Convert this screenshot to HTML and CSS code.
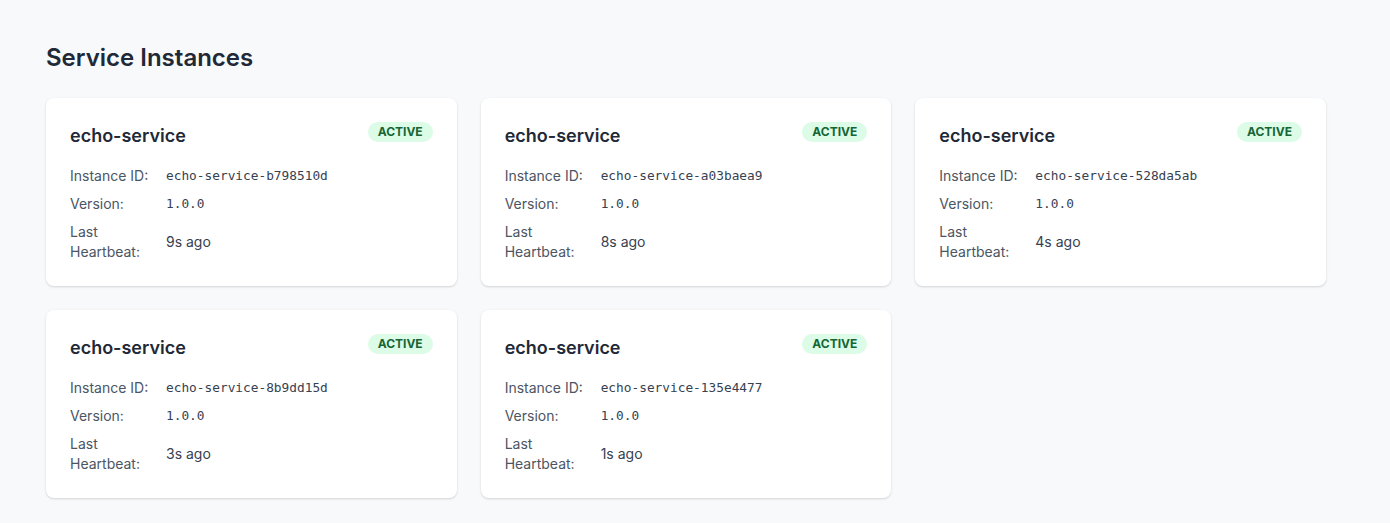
FILE: index.html
```html
<!DOCTYPE html>
<html>
<head>
<meta charset="utf-8">
<link rel="stylesheet" href="styles.css">
</head>
<body>
<main class="page">
  <h1 class="page-title">Service Instances</h1>
  <div class="grid">
    <div class="card">
      <div class="card-head"><h2 class="name">echo-service</h2><span class="badge">ACTIVE</span></div>
      <div class="rows">
        <div class="row"><span class="label">Instance ID:</span><span class="value mono">echo-service-b798510d</span></div>
        <div class="row"><span class="label">Version:</span><span class="value mono">1.0.0</span></div>
        <div class="row"><span class="label">Last Heartbeat:</span><span class="value">9s ago</span></div>
      </div>
    </div>
    <div class="card">
      <div class="card-head"><h2 class="name">echo-service</h2><span class="badge">ACTIVE</span></div>
      <div class="rows">
        <div class="row"><span class="label">Instance ID:</span><span class="value mono">echo-service-a03baea9</span></div>
        <div class="row"><span class="label">Version:</span><span class="value mono">1.0.0</span></div>
        <div class="row"><span class="label">Last Heartbeat:</span><span class="value">8s ago</span></div>
      </div>
    </div>
    <div class="card">
      <div class="card-head"><h2 class="name">echo-service</h2><span class="badge">ACTIVE</span></div>
      <div class="rows">
        <div class="row"><span class="label">Instance ID:</span><span class="value mono">echo-service-528da5ab</span></div>
        <div class="row"><span class="label">Version:</span><span class="value mono">1.0.0</span></div>
        <div class="row"><span class="label">Last Heartbeat:</span><span class="value">4s ago</span></div>
      </div>
    </div>
    <div class="card">
      <div class="card-head"><h2 class="name">echo-service</h2><span class="badge">ACTIVE</span></div>
      <div class="rows">
        <div class="row"><span class="label">Instance ID:</span><span class="value mono">echo-service-8b9dd15d</span></div>
        <div class="row"><span class="label">Version:</span><span class="value mono">1.0.0</span></div>
        <div class="row"><span class="label">Last Heartbeat:</span><span class="value">3s ago</span></div>
      </div>
    </div>
    <div class="card">
      <div class="card-head"><h2 class="name">echo-service</h2><span class="badge">ACTIVE</span></div>
      <div class="rows">
        <div class="row"><span class="label">Instance ID:</span><span class="value mono">echo-service-135e4477</span></div>
        <div class="row"><span class="label">Version:</span><span class="value mono">1.0.0</span></div>
        <div class="row"><span class="label">Last Heartbeat:</span><span class="value">1s ago</span></div>
      </div>
    </div>
  </div>
</main>
</body>
</html>
```

FILE: styles.css
```css
* { box-sizing: border-box; }
html, body { margin: 0; padding: 0; }
body {
  background: #f8f9fa;
  font-family: Inter, "Noto Sans", sans-serif;
  color: #1f2937;
}
.page {
  width: 1372px;
  padding: 42px 46px 24px;
}
.page-title {
  margin: 0 0 24px;
  font-size: 24px;
  line-height: 32px;
  font-weight: 600;
  color: #1f2937;
}
.grid {
  display: grid;
  width: 1280px;
  grid-template-columns: repeat(3, 1fr);
  gap: 24px;
}
.card {
  background: #fff;
  border-radius: 8px;
  padding: 24px;
  box-shadow: 0 1px 3px rgba(0,0,0,0.10), 0 1px 2px rgba(0,0,0,0.06);
}
.card-head {
  display: flex;
  justify-content: space-between;
  align-items: flex-start;
  margin-bottom: 17px;
}
.name {
  margin: 0;
  font-size: 18px;
  line-height: 27px;
  font-weight: 600;
  color: #1f2937;
}
.badge {
  background: #dcfce7;
  color: #166534;
  font-size: 12px;
  font-weight: 700;
  line-height: 16px;
  padding: 2px 10px;
  border-radius: 10px;
}
.rows {
  display: flex;
  flex-direction: column;
  gap: 8px;
}
.row {
  display: flex;
  align-items: center;
  font-size: 14px;
  line-height: 20px;
}
.label {
  width: 80px;
  margin-right: 16px;
  flex-shrink: 0;
  color: #4b5563;
}
.value {
  color: #374151;
}
.mono {
  font-family: "DejaVu Sans Mono", monospace;
  font-size: 12.8px;
}
```
